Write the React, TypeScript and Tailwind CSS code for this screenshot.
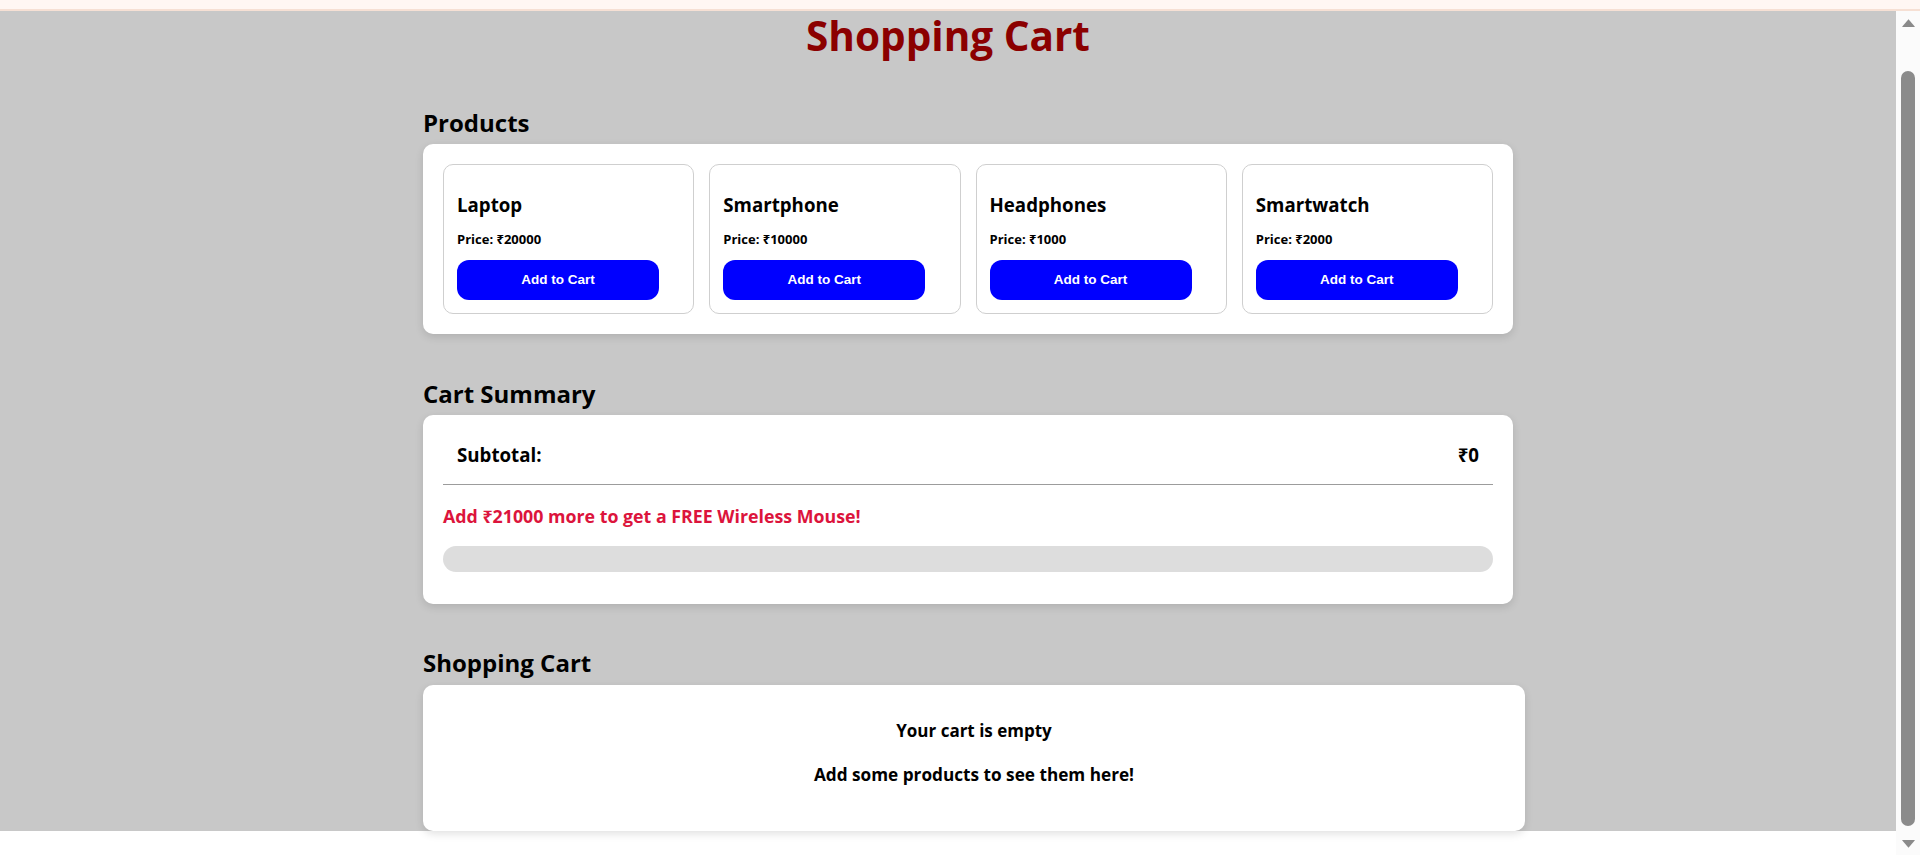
import React from "react";

const products = [
  { name: "Laptop", price: 20000 },
  { name: "Smartphone", price: 10000 },
  { name: "Headphones", price: 1000 },
  { name: "Smartwatch", price: 2000 },
];

function Scrollbar() {
  return (
    <div className="w-[24px] h-full bg-[#fbfbfb] flex flex-col items-center shrink-0">
      <div className="h-[7px]" />
      <svg width="15" height="10" viewBox="0 0 15 10" className="shrink-0">
        <path d="M7.5 1.2 L13.7 8.5 Q14 9 13.4 9 L1.6 9 Q1 9 1.3 8.5 Z" fill="#8a8a8a" />
      </svg>
      <div className="h-[43px]" />
      <div className="w-[14px] flex-1 rounded-full bg-[#8b8b8b]" />
      <div className="h-[13px]" />
      <svg width="15" height="10" viewBox="0 0 15 10" className="shrink-0">
        <path d="M7.5 8.8 L13.7 1.5 Q14 1 13.4 1 L1.6 1 Q1 1 1.3 1.5 Z" fill="#8a8a8a" />
      </svg>
      <div className="h-[6px]" />
    </div>
  );
}

export default function App() {
  const font = "font-['Open_Sans',_'Noto_Sans',_sans-serif]";
  return (
    <div className={`h-[855px] w-full flex flex-col overflow-hidden text-black ${font}`}>
      <div className="h-[11px] shrink-0 bg-[#fff7f3] border-b-[2px] border-[#f6e0d4]" />
      <div className="flex flex-1 min-h-0">
        <div className="flex-1 min-w-0 bg-white">
          <div className="h-[820px] bg-[#c8c8c8]">
            <h1 className="pt-[1px] text-center text-[40.5px] leading-[47px] font-bold text-[#8b0000]">
              Shopping Cart
            </h1>
            <div className="w-[1050px] mx-auto">
              <h2 className="mt-[48px] text-[24px] leading-[32px] font-bold">Products</h2>
              <div className="mt-[5px] w-[1090px] rounded-[10px] bg-white p-[20px] shadow-[0_3px_8px_rgba(0,0,0,0.12)]">
                <div className="grid grid-cols-4 gap-[15px]">
                  {products.map((p) => (
                    <div
                      key={p.name}
                      className="rounded-[10px] border border-[#cfcfcf] px-[13px] pt-[28px] pb-[13px] flex flex-col"
                    >
                      <h3 className="text-[18.7px] leading-[24px] font-bold">{p.name}</h3>
                      <p className="mt-[13px] text-[13px] leading-[18px] font-bold">
                        Price: ₹{p.price}
                      </p>
                      <button className="mt-[12px] h-[40px] w-[202px] rounded-[12px] bg-[#0000ff] text-white font-['Liberation_Sans',_Arial,_sans-serif] text-[13.5px] font-bold">
                        Add to Cart
                      </button>
                    </div>
                  ))}
                </div>
              </div>

              <h2 className="mt-[44px] text-[24px] leading-[32px] font-bold">Cart Summary</h2>
              <div className="mt-[5px] w-[1090px] rounded-[10px] bg-white p-[20px] shadow-[0_3px_8px_rgba(0,0,0,0.12)]">
                <div className="flex justify-between items-center px-[14px] pt-[8px] pb-[17px] border-b border-[#9c9c9c] text-[18.7px] leading-[24px] font-bold">
                  <span>Subtotal:</span>
                  <span>₹0</span>
                </div>
                <p className="mt-[19px] text-[17.8px] leading-[24px] font-bold text-[#dc143c]">
                  Add ₹21000 more to get a FREE Wireless Mouse!
                </p>
                <div className="mt-[18px] mb-[12px] h-[26px] w-full rounded-full bg-[#dddddd]" />
              </div>

              <h2 className="mt-[43px] text-[24px] leading-[32px] font-bold">Shopping Cart</h2>
              <div className="mt-[6px] w-[1102px] rounded-[10px] bg-white pt-[34px] pb-[44px] shadow-[0_3px_8px_rgba(0,0,0,0.12)] text-center">
                <p className="text-[17px] leading-[24px] font-bold">Your cart is empty</p>
                <p className="mt-[20px] text-[17.2px] leading-[24px] font-bold">
                  Add some products to see them here!
                </p>
              </div>
            </div>
          </div>
        </div>
        <Scrollbar />
      </div>
    </div>
  );
}
